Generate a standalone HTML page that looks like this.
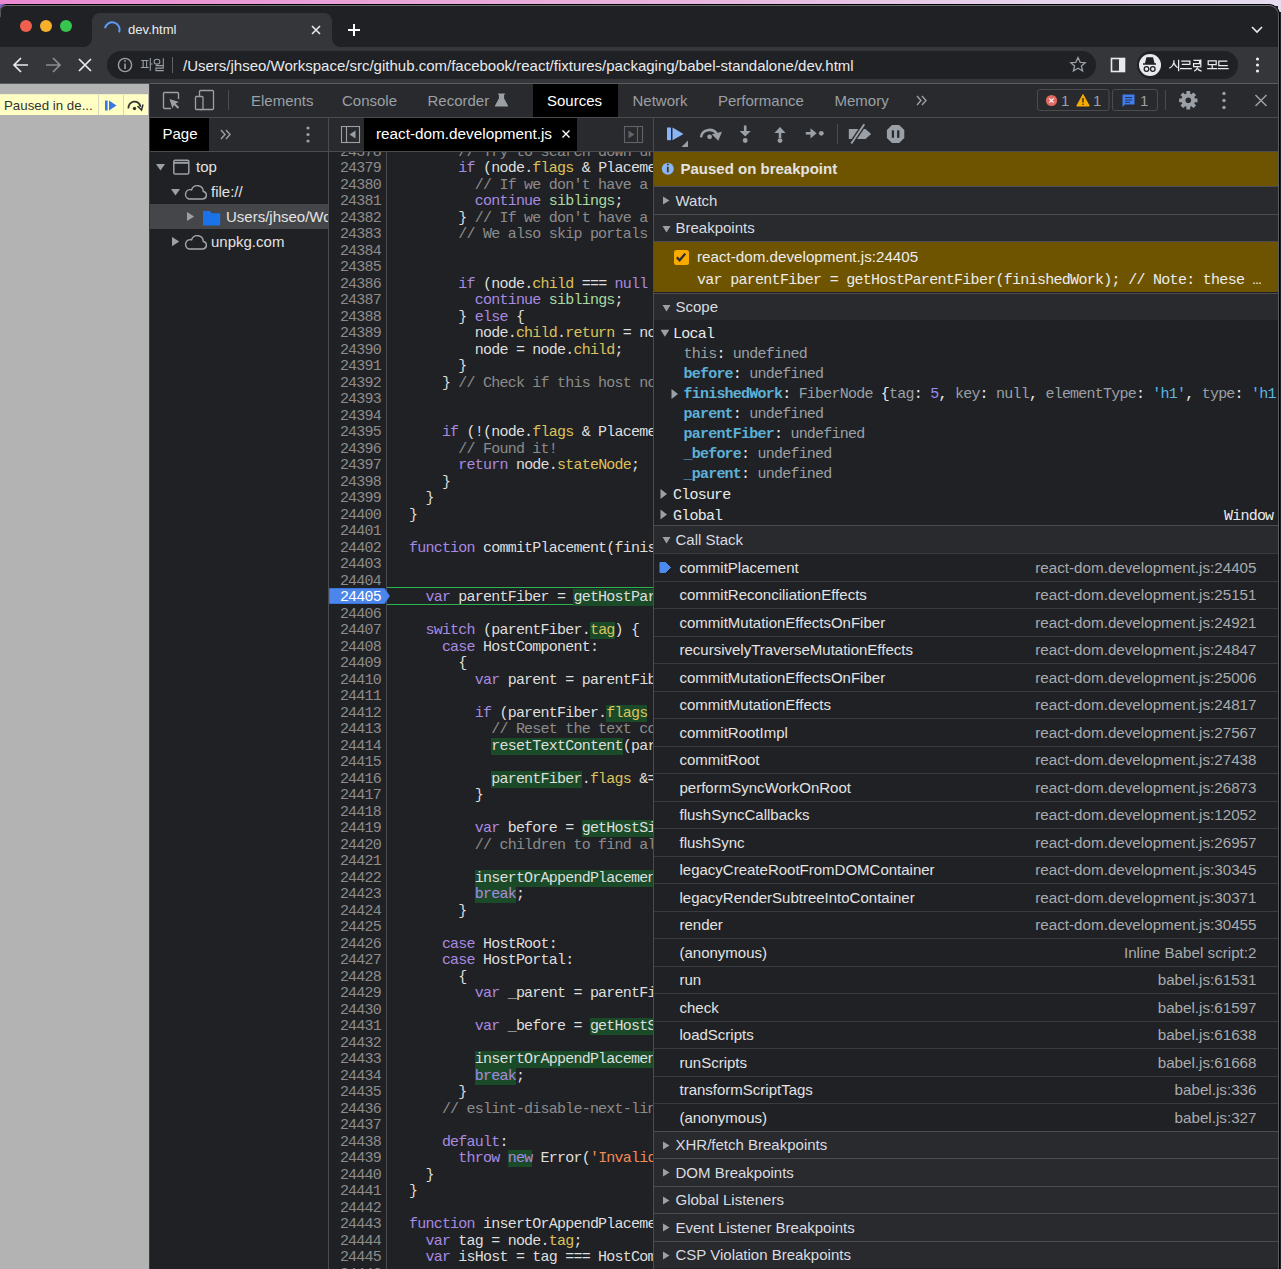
<!DOCTYPE html>
<html><head><meta charset="utf-8">
<style>
*{box-sizing:border-box;margin:0;padding:0}
html,body{width:1281px;height:1269px;overflow:hidden;background:#202124}
body{position:relative;font-family:"Liberation Sans",sans-serif;color:#e8eaed}
.a{position:absolute}
.mono{font-family:"Liberation Mono",monospace}
svg{position:absolute;overflow:visible}
#pink{left:0;top:0;width:1281px;height:12px;background:linear-gradient(90deg,#ea8ad3 0%,#e9a4d9 30%,#e8b6de 55%,#e6d3ec 80%,#e5dcef 100%)}
#win{left:0;top:4px;width:1280px;height:1265px;background:#202124;border-top:1px solid #000;border-right:1px solid #000;border-radius:7px 11px 0 0;overflow:hidden}
#corner{left:0;top:4px;width:8px;height:8px;background:#8a6cc2}
#winhl{left:0;top:5px;width:1279px;height:1264px;border-top:1px solid #6a6b6e;border-right:1px solid #5a5b5e;border-radius:6px 10px 0 0;pointer-events:none;z-index:50}
#tabbar{left:1px;top:6px;width:1277px;height:41px;background:#202124;border-radius:5px 0 0 0}
#tab{left:92px;top:13px;width:240px;height:34px;background:#35363a;border-radius:8px 8px 0 0}
#toolbar{left:0;top:47px;width:1278px;height:37px;background:#35363a}
#omni{left:107px;top:51px;width:989px;height:28px;background:#202124;border-radius:14px}
#page{left:0;top:84px;width:149px;height:1185px;background:#b3b3b3}
#dt{left:149px;top:83px;width:1129px;height:1186px;background:#202124;border-left:1px solid #3a3b3e}
.tt{top:92px;font-size:15px;line-height:17px;color:#9aa0a6;white-space:nowrap}
.nv{font-size:15px;line-height:17px;color:#e3e3e3;white-space:nowrap}
.nums,.code{font-size:15px;line-height:16.5px;letter-spacing:-0.78px;white-space:pre}
.nums{text-align:right;color:#8c8c8c}
.code{color:#dedede}
.code .k{color:#a88ae0}.code .p{color:#dcc25c}.code .v{color:#a9dba0}.code .c{color:#8c8c8c}.code .s{color:#f28b54}
.code .h{background:#1b4a29}
.code div{padding-left:22px}
.nums div.ex{color:#fff}
.sh{left:0;width:624px;height:27.5px;background:#292a2d;border-top:1px solid #4a4c50;font-size:15px;line-height:17px;color:#d9dce0;white-space:nowrap}
.sh span{position:absolute;left:21.5px;top:4.5px}
.sc{font-size:15px;line-height:17px;letter-spacing:-0.78px;white-space:pre}
.sc .und{color:#9aa0a6}.sc .pn{color:#5db0d7}.sc .str{color:#5cb8e0}
.cs{position:relative;height:27.5px;border-top:1px solid #3a3b3e;font-size:15px;line-height:17px;white-space:nowrap}
.cs .fn{position:absolute;left:25.5px;top:4.5px;color:#e3e3e3}
.cs .loc{position:absolute;right:21.5px;top:4.5px;color:#a8abae;font-size:15.2px}
</style></head>
<body>
<div id="pink" class="a"></div>
<div id="corner" class="a"></div>
<div id="win" class="a"></div>
<div id="tabbar" class="a"></div>
<div id="tab" class="a"></div>
<div id="toolbar" class="a"></div>
<div id="omni" class="a"></div>
<div id="page" class="a"></div>
<div id="dt" class="a"></div>

<!-- traffic lights -->
<div class="a" style="left:20px;top:20px;width:12px;height:12px;border-radius:50%;background:#f0604f"></div>
<div class="a" style="left:40px;top:20px;width:12px;height:12px;border-radius:50%;background:#f6b02b"></div>
<div class="a" style="left:60px;top:20px;width:12px;height:12px;border-radius:50%;background:#36c54f"></div>
<!-- tab flares -->
<div class="a" style="left:84px;top:39px;width:8px;height:8px;background:radial-gradient(circle at 0 0,#202124 7.5px,#35363a 8px)"></div>
<div class="a" style="left:332px;top:39px;width:8px;height:8px;background:radial-gradient(circle at 100% 0,#202124 7.5px,#35363a 8px)"></div>
<svg class="a" style="left:0;top:0" width="1281" height="84">
 <path d="M105 28.3 A7.4 7.4 0 1 1 119.2 32.3" fill="none" stroke="#5b9cf6" stroke-width="2"/>
 <path d="M312 26 L320 34 M320 26 L312 34" stroke="#e8eaed" stroke-width="1.6"/>
 <path d="M348 30 H360 M354 24 V36" stroke="#fff" stroke-width="2"/>
 <path d="M1252 27 L1257 32 L1262 27" fill="none" stroke="#e8eaed" stroke-width="1.6"/>
 <!-- back fwd stop -->
 <path d="M14 65 H28 M21 58 L14 65 L21 72" fill="none" stroke="#e8eaed" stroke-width="1.7"/>
 <path d="M46 65 H60 M53 58 L60 65 L53 72" fill="none" stroke="#8a8c90" stroke-width="1.7"/>
 <path d="M79 59 L91 71 M91 59 L79 71" stroke="#e8eaed" stroke-width="1.7"/>
 <circle cx="125" cy="65" r="6.6" fill="none" stroke="#9aa0a6" stroke-width="1.4"/>
 <path d="M125 63.5 V69" stroke="#9aa0a6" stroke-width="1.6"/><circle cx="125" cy="61" r="0.9" fill="#9aa0a6"/>
 <path d="M172.5 57 V73" stroke="#5f6368" stroke-width="1"/>
 <path d="M1078 57.5 L1080.2 62.3 L1085.2 62.7 L1081.4 66 L1082.6 71 L1078 68.3 L1073.4 71 L1074.6 66 L1070.8 62.7 L1075.8 62.3 Z" fill="none" stroke="#9aa0a6" stroke-width="1.3"/>
 <rect x="1111.5" y="58.5" width="13" height="13" fill="none" stroke="#e8eaed" stroke-width="1.6"/>
 <rect x="1119" y="59" width="5" height="12" fill="#e8eaed"/>
 <circle cx="1257.5" cy="59" r="1.6" fill="#e8eaed"/><circle cx="1257.5" cy="65" r="1.6" fill="#e8eaed"/><circle cx="1257.5" cy="71" r="1.6" fill="#e8eaed"/>
</svg>
<div class="a" style="left:128px;top:22px;font-size:13.1px;color:#e8eaed;line-height:16px">dev.html</div>
<svg class="a" style="left:0;top:0" width="200" height="84"><g fill="none" stroke="#9aa0a6" stroke-width="1.05">
 <path d="M141.2 60.4 H148.4 M143.2 60.5 V67.4 M146.6 60.5 V67.4 M140.9 67.5 H148.8"/>
 <path d="M150.3 58.1 V70.7 M150.3 63.9 H152.6"/>
 <ellipse cx="157" cy="61.7" rx="2.9" ry="2.4"/>
 <path d="M163.3 58.2 V67.6 M155.6 65.6 H163.3 V68.1 H155.9 V70.6 H163.8"/>
</g></svg>
<div class="a" style="left:183px;top:57px;font-size:15px;color:#e8eaed;line-height:17px;white-space:nowrap">/Users/jhseo/Workspace/src/github.com/facebook/react/fixtures/packaging/babel-standalone/dev.html</div>
<div class="a" style="left:1137px;top:51px;width:101px;height:28px;border-radius:14px;background:#202124"></div>
<div class="a" style="left:1139px;top:54px;width:22px;height:22px;border-radius:50%;background:#e8eaed"></div>
<svg class="a" style="left:0;top:0" width="1281" height="84">
 <path d="M1143 64 H1156 M1145.5 64 L1147 58 H1152.5 L1154 64" fill="#202124" stroke="#202124" stroke-width="1.4"/>
 <circle cx="1146.5" cy="69" r="2.3" fill="none" stroke="#202124" stroke-width="1.3"/>
 <circle cx="1152.8" cy="69" r="2.3" fill="none" stroke="#202124" stroke-width="1.3"/>
</svg>
<svg class="a" style="left:0;top:0" width="1281" height="84"><g fill="none" stroke="#e8eaed" stroke-width="1.25">
 <path d="M1173.9 60.2 V62.5 Q1173.2 66.2 1169.3 68.3 M1174 63 Q1175 66.2 1177.6 67.8 M1178.6 59.8 V71.2"/>
 <path d="M1181.2 61.2 H1189.9 V64.8 M1181.8 64.3 H1189.9 M1180 68.5 H1191.8"/>
 <path d="M1193.4 60.4 H1199.6 V63.6 H1193.6 V66.6 H1199.9 M1200.8 59.4 V67.4 M1197.5 67.4 Q1196.8 70 1194.2 71.2 M1197.6 68.6 Q1198.6 70.4 1201.6 71.2"/>
 <path d="M1208.2 60.8 H1216.2 V64.6 H1208.2 Z M1212.2 64.6 V68.5 M1207.1 68.5 H1217.2"/>
 <path d="M1227.4 61.2 H1218.8 V65.5 H1227.8 M1217.9 68.5 H1228.7"/>
</g></svg>
<div class="a" style="left:0;top:83px;width:149px;height:1px;background:#5a5b5e"></div>
<!-- paused overlay -->
<div class="a" style="left:0;top:94px;width:148px;height:21px;background:#ffffc4;border-top:1px solid #f0f0c0"></div>
<div class="a" style="left:4px;top:98px;font-size:13.3px;color:#333;line-height:16px;white-space:nowrap">Paused in de...</div>
<div class="a" style="left:98px;top:95px;width:1px;height:20px;background:#d7d7c0"></div>
<div class="a" style="left:123px;top:95px;width:1px;height:20px;background:#d7d7c0"></div>
<svg class="a" style="left:0;top:0" width="160" height="130">
 <rect x="105" y="100.5" width="2.6" height="10" fill="#3b78e7"/>
 <path d="M109 100.5 L116.5 105.5 L109 110.5 Z" fill="#3b78e7"/>
 <path d="M128.5 108.5 A6 6 0 0 1 140.5 106.8" fill="none" stroke="#333" stroke-width="1.8"/>
 <path d="M137.5 106 L141.5 110 L143 104.5" fill="none" stroke="#333" stroke-width="1.5"/>
 <circle cx="134.5" cy="108.5" r="1.7" fill="#333"/>
</svg>

<!-- devtools main toolbar -->
<div class="a" style="left:150px;top:83px;width:1128px;height:1px;background:#5c5d60"></div>
<div class="a" style="left:150px;top:84px;width:1128px;height:33px;background:#292a2d"></div>
<div class="a" style="left:150px;top:117px;width:1128px;height:1px;background:#4a4c50"></div>
<div class="a" style="left:533px;top:84px;width:85px;height:33px;background:#000"></div>
<div class="a tt" style="left:251px">Elements</div>
<div class="a tt" style="left:342px">Console</div>
<div class="a tt" style="left:427.5px">Recorder</div>
<div class="a tt" style="left:547px;color:#fff">Sources</div>
<div class="a tt" style="left:632.5px">Network</div>
<div class="a tt" style="left:718px">Performance</div>
<div class="a tt" style="left:834.5px">Memory</div>
<svg class="a" style="left:0;top:0" width="1281" height="160">
 <!-- inspect -->
 <path d="M171 108.5 H164.5 Q163.5 108.5 163.5 107.5 V93.5 Q163.5 92.5 164.5 92.5 H177.5 Q178.5 92.5 178.5 93.5 V99" fill="none" stroke="#9aa0a6" stroke-width="1.4"/>
 <path d="M169.5 99 L179 102 L175.5 103.5 L179.2 107.2 L177.7 108.7 L174 105 L172.5 108.5 Z" fill="#9aa0a6"/>
 <!-- device -->
 <rect x="199.5" y="90.5" width="14" height="19" rx="1" fill="none" stroke="#9aa0a6" stroke-width="1.3"/>
 <rect x="195.5" y="96.5" width="7.5" height="13" rx="1" fill="#292a2d" stroke="#9aa0a6" stroke-width="1.3"/>
 <path d="M228.5 90 V110" stroke="#4a4c50" stroke-width="1"/>
 <!-- flask -->
 <path d="M498 94 H505 M499.5 94 V98.5 L495.5 106 H507.5 L503.5 98.5 V94" fill="#9aa0a6" stroke="#9aa0a6" stroke-width="1.2" stroke-linejoin="round"/>
 <!-- more tabs -->
 <path d="M917 96 L921 100.5 L917 105 M922 96 L926 100.5 L922 105" fill="none" stroke="#9aa0a6" stroke-width="1.4"/>
 <!-- badges -->
 <rect x="1037.5" y="89.5" width="71.5" height="21" rx="2.5" fill="none" stroke="#4a4c50" stroke-width="1"/>
 <rect x="1112.5" y="89.5" width="45" height="21" rx="2.5" fill="none" stroke="#4a4c50" stroke-width="1"/>
 <circle cx="1051.5" cy="100.5" r="5.6" fill="#e46962"/>
 <path d="M1049.3 98.3 L1053.7 102.7 M1053.7 98.3 L1049.3 102.7" stroke="#fff" stroke-width="1.1"/>
 <path d="M1083 94.5 L1089.3 106 H1076.7 Z" fill="#f9ab00" stroke="#f9ab00" stroke-width="1" stroke-linejoin="round"/>
 <path d="M1083 98 V102.5" stroke="#292a2d" stroke-width="1.4"/><circle cx="1083" cy="104.3" r="0.8" fill="#292a2d"/>
 <path d="M1122.5 94.5 H1134.5 V104.5 H1125 L1122.5 107 Z" fill="#3f7df0"/>
 <path d="M1125 97.5 H1132 M1125 100 H1132 M1125 102.3 H1130" stroke="#292a2d" stroke-width="0.9"/>
 <path d="M1165.5 90 V110" stroke="#4a4c50" stroke-width="1"/>
 <!-- gear -->
 <g transform="translate(1188.3,100.3)" fill="#9aa0a6">
  <circle r="6.8"/>
  <rect x="-1.9" y="-9.2" width="3.8" height="4" rx="0.5" transform="rotate(0)"/>
  <rect x="-1.9" y="-9.2" width="3.8" height="4" rx="0.5" transform="rotate(45)"/>
  <rect x="-1.9" y="-9.2" width="3.8" height="4" rx="0.5" transform="rotate(90)"/>
  <rect x="-1.9" y="-9.2" width="3.8" height="4" rx="0.5" transform="rotate(135)"/>
  <rect x="-1.9" y="-9.2" width="3.8" height="4" rx="0.5" transform="rotate(180)"/>
  <rect x="-1.9" y="-9.2" width="3.8" height="4" rx="0.5" transform="rotate(225)"/>
  <rect x="-1.9" y="-9.2" width="3.8" height="4" rx="0.5" transform="rotate(270)"/>
  <rect x="-1.9" y="-9.2" width="3.8" height="4" rx="0.5" transform="rotate(315)"/>
  <circle r="2.8" fill="#292a2d"/>
 </g>
 <circle cx="1224" cy="93.5" r="1.7" fill="#9aa0a6"/><circle cx="1224" cy="100.5" r="1.7" fill="#9aa0a6"/><circle cx="1224" cy="107.5" r="1.7" fill="#9aa0a6"/>
 <path d="M1255.5 95 L1266.5 106 M1266.5 95 L1255.5 106" stroke="#9aa0a6" stroke-width="1.5"/>
</svg>
<div class="a" style="left:1061px;top:92px;font-size:15px;color:#9aa0a6;line-height:17px">1</div>
<div class="a" style="left:1093px;top:92px;font-size:15px;color:#9aa0a6;line-height:17px">1</div>
<div class="a" style="left:1140px;top:92px;font-size:15px;color:#9aa0a6;line-height:17px">1</div>

<!-- sources sub toolbar -->
<div class="a" style="left:150px;top:118px;width:1128px;height:33px;background:#292a2d"></div>
<div class="a" style="left:150px;top:151px;width:1128px;height:1px;background:#4a4c50"></div>
<div class="a" style="left:150px;top:118px;width:59px;height:33px;background:#000"></div>
<div class="a tt" style="left:162.5px;top:125px;color:#fff">Page</div>
<div class="a" style="left:328px;top:118px;width:1px;height:1151px;background:#4a4c50"></div>
<div class="a" style="left:364px;top:118px;width:213px;height:33px;background:#000"></div>
<div class="a tt" style="left:376px;top:125px;color:#fff;font-size:15.3px">react-dom.development.js</div>
<div class="a" style="left:653px;top:118px;width:1px;height:1151px;background:#4a4c50"></div>
<svg class="a" style="left:0;top:0" width="1281" height="300">
 <path d="M221 130 L225 134.5 L221 139 M226 130 L230 134.5 L226 139" fill="none" stroke="#9aa0a6" stroke-width="1.4"/>
 <circle cx="308" cy="128" r="1.6" fill="#9aa0a6"/><circle cx="308" cy="134.5" r="1.6" fill="#9aa0a6"/><circle cx="308" cy="141" r="1.6" fill="#9aa0a6"/>
 <rect x="341.5" y="126.5" width="18" height="16" fill="none" stroke="#9aa0a6" stroke-width="1.1"/>
 <path d="M346.5 126.5 V142.5" stroke="#9aa0a6" stroke-width="1.1"/>
 <path d="M355.5 130.5 L349.5 134.5 L355.5 138.5 Z" fill="#9aa0a6"/>
 <path d="M562.5 130.5 L569.5 137.5 M569.5 130.5 L562.5 137.5" stroke="#fff" stroke-width="1.4"/>
 <rect x="624.5" y="126.5" width="18" height="16" fill="none" stroke="#5f6368" stroke-width="1.1"/>
 <path d="M637.5 126.5 V142.5" stroke="#5f6368" stroke-width="1.1"/>
 <path d="M628.5 130.5 L634.5 134.5 L628.5 138.5 Z" fill="#5f6368"/>
 <!-- debugger toolbar -->
 <rect x="667" y="127.5" width="4" height="12.7" fill="#8ab4f8"/>
 <path d="M672.5 127.5 L683.5 133.9 L672.5 140.2 Z" fill="#8ab4f8"/>
 <path d="M688 140.5 V147 H681.5 Z" fill="#9aa0a6"/>
 <path d="M701 137.3 A8.6 8.3 0 0 1 716.6 133.5" fill="none" stroke="#9aa0a6" stroke-width="2.5"/>
 <path d="M711.8 134.2 L722 131.8 L718.3 140.8 Z" fill="#9aa0a6"/>
 <circle cx="709.6" cy="136.8" r="2.4" fill="#9aa0a6"/>
 <path d="M745.2 125.5 V132.5" stroke="#9aa0a6" stroke-width="2.6"/>
 <path d="M739.6 131 H750.8 L745.2 136.5 Z" fill="#9aa0a6"/>
 <circle cx="745.2" cy="140.5" r="2.4" fill="#9aa0a6"/>
 <path d="M780 132 V138" stroke="#9aa0a6" stroke-width="2.6"/>
 <path d="M774.4 133 H785.6 L780 127 Z" fill="#9aa0a6"/>
 <circle cx="780" cy="140.6" r="2.4" fill="#9aa0a6"/>
 <path d="M805.8 133.3 H811.5" stroke="#9aa0a6" stroke-width="2.6"/>
 <path d="M810.5 128.2 V138.4 L816.6 133.3 Z" fill="#9aa0a6"/>
 <circle cx="821.3" cy="133.3" r="2.4" fill="#9aa0a6"/>
 <path d="M837.5 124 V144" stroke="#4a4c50" stroke-width="1"/>
 <path d="M848.8 128.9 H865.5 L871.1 134 L865.5 138.9 H848.8 Z" fill="#9aa0a6"/>
 <path d="M851.3 143.5 L864.3 124.2" stroke="#292a2d" stroke-width="4.6"/>
 <path d="M851.3 143.5 L864.3 124.2" stroke="#9aa0a6" stroke-width="2"/>
 <path d="M892 125 H899.2 L904.3 130.1 V137.9 L899.2 143 H892 L886.9 137.9 V130.1 Z" fill="#9aa0a6"/>
 <rect x="891.8" y="130.3" width="2.2" height="7.5" fill="#292a2d"/><rect x="897.1" y="130.3" width="2.3" height="7.5" fill="#292a2d"/>
</svg>
<!-- navigator -->
<div class="a" style="left:150px;top:204px;width:178px;height:25px;background:#454649"></div>
<svg class="a" style="left:0;top:0" width="330" height="260">
 <path d="M156 164 H165 L160.5 170.5 Z" fill="#9aa0a6"/>
 <rect x="173.8" y="160.2" width="15" height="13.8" rx="1.3" fill="none" stroke="#9aa0a6" stroke-width="1.5"/>
 <path d="M174 162.8 H188.5" stroke="#9aa0a6" stroke-width="2"/>
 <path d="M171 189 H180 L175.5 195.5 Z" fill="#9aa0a6"/>
 <path d="M189 199 H203 A3.8 3.8 0 0 0 203.3 191.5 A6 6 0 0 0 191.6 189.8 A4.7 4.7 0 0 0 189 199 Z" fill="none" stroke="#a3a6aa" stroke-width="1.4"/>
 <path d="M187 212 V221 L194.2 216.5 Z" fill="#9aa0a6"/>
 <path d="M203 211 H210 L211.5 213.3 H220.2 V225.5 H203 Z" fill="#1a73e8"/>
 <path d="M172 237 V246.2 L179.3 241.6 Z" fill="#9aa0a6"/>
 <path d="M189 249 H203 A3.8 3.8 0 0 0 203.3 241.5 A6 6 0 0 0 191.6 239.8 A4.7 4.7 0 0 0 189 249 Z" fill="none" stroke="#a3a6aa" stroke-width="1.4"/>
</svg>
<div class="a nv" style="left:196px;top:158px">top</div>
<div class="a nv" style="left:211px;top:183px">file://</div>
<div class="a nv" style="left:226px;top:208px;width:102px;overflow:hidden">Users/jhseo/Workspace</div>
<div class="a nv" style="left:211px;top:233px">unpkg.com</div>

<!-- editor -->
<div class="a" style="left:329px;top:152px;width:324px;height:1117px;overflow:hidden;background:#202124">
 <div class="a" style="left:57px;top:0;width:1px;height:1117px;background:#4a4c50"></div>
 <div class="a" style="left:58px;top:435px;width:266px;height:18px;border-top:1px solid #2bb553;border-bottom:1px solid #2bb553"></div>
 <svg class="a" style="left:0;top:0" width="70" height="1117"><path d="M0.5 436.5 H55.5 L60.5 444 L55.5 451.5 H0.5 Z" fill="#4d86ea" stroke="#3b73dc" stroke-width="1"/></svg>
 <div class="a mono nums" style="left:0;top:-7.25px;width:52px"><div>24378</div><div>24379</div><div>24380</div><div>24381</div><div>24382</div><div>24383</div><div>24384</div><div>24385</div><div>24386</div><div>24387</div><div>24388</div><div>24389</div><div>24390</div><div>24391</div><div>24392</div><div>24393</div><div>24394</div><div>24395</div><div>24396</div><div>24397</div><div>24398</div><div>24399</div><div>24400</div><div>24401</div><div>24402</div><div>24403</div><div>24404</div><div class="ex">24405</div><div>24406</div><div>24407</div><div>24408</div><div>24409</div><div>24410</div><div>24411</div><div>24412</div><div>24413</div><div>24414</div><div>24415</div><div>24416</div><div>24417</div><div>24418</div><div>24419</div><div>24420</div><div>24421</div><div>24422</div><div>24423</div><div>24424</div><div>24425</div><div>24426</div><div>24427</div><div>24428</div><div>24429</div><div>24430</div><div>24431</div><div>24432</div><div>24433</div><div>24434</div><div>24435</div><div>24436</div><div>24437</div><div>24438</div><div>24439</div><div>24440</div><div>24441</div><div>24442</div><div>24443</div><div>24444</div><div>24445</div><div>24446</div></div>
 <div class="a mono code" style="left:58px;top:-7.25px;width:266px"><div>      <span class="c">// Try to search down until we find a Host.</span></div><div>      <span class="k">if</span> (node.<span class="p">flags</span> &amp; Placement) {</div><div>        <span class="c">// If we don&#x27;t have a child, try the siblings instead.</span></div><div>        <span class="k">continue</span> <span class="v">siblings</span>;</div><div>      } <span class="c">// If we don&#x27;t have a child, try the siblings instead.</span></div><div>      <span class="c">// We also skip portals because they are not part of this host tree.</span></div><div>&nbsp;</div><div>&nbsp;</div><div>      <span class="k">if</span> (node.<span class="p">child</span> === <span class="k">null</span> || node.<span class="p">tag</span> === HostPortal) {</div><div>        <span class="k">continue</span> <span class="v">siblings</span>;</div><div>      } <span class="k">else</span> {</div><div>        node.<span class="p">child</span>.<span class="p">return</span> = node;</div><div>        node = node.<span class="p">child</span>;</div><div>      }</div><div>    } <span class="c">// Check if this host node is stable or about to be placed.</span></div><div>&nbsp;</div><div>&nbsp;</div><div>    <span class="k">if</span> (!(node.<span class="p">flags</span> &amp; Placement)) {</div><div>      <span class="c">// Found it!</span></div><div>      <span class="k">return</span> node.<span class="p">stateNode</span>;</div><div>    }</div><div>  }</div><div>}</div><div>&nbsp;</div><div><span class="k">function</span> commitPlacement(finishedWork) {</div><div>&nbsp;</div><div>&nbsp;</div><div class="ex">  <span class="k">var</span> parentFiber = <span class="h">getHostParentFiber</span>(finishedWork);</div><div>&nbsp;</div><div>  <span class="k">switch</span> (parentFiber.<span class="h"><span class="p">tag</span></span>) {</div><div>    <span class="k">case</span> HostComponent:</div><div>      {</div><div>        <span class="k">var</span> parent = parentFiber.<span class="p">stateNode</span>;</div><div>&nbsp;</div><div>        <span class="k">if</span> (parentFiber.<span class="h"><span class="p">flags</span></span> &amp; ContentReset) {</div><div>          <span class="c">// Reset the text content of the parent before doing any insertions</span></div><div>          <span class="h">resetTextContent</span>(parent); <span class="c">// Clear ContentReset from the effect tag</span></div><div>&nbsp;</div><div>          <span class="h">parentFiber</span>.<span class="p">flags</span> &amp;= ~ContentReset;</div><div>        }</div><div>&nbsp;</div><div>        <span class="k">var</span> before = <span class="h">getHostSibling</span>(finishedWork); <span class="c">// We only have the top Fiber</span></div><div>        <span class="c">// children to find all the terminal nodes.</span></div><div>&nbsp;</div><div>        <span class="h">insertOrAppendPlacementNode</span>(finishedWork, before, parent);</div><div>        <span class="h"><span class="k">break</span></span>;</div><div>      }</div><div>&nbsp;</div><div>    <span class="k">case</span> HostRoot:</div><div>    <span class="k">case</span> HostPortal:</div><div>      {</div><div>        <span class="k">var</span> _parent = parentFiber.<span class="p">stateNode</span>.<span class="p">containerInfo</span>;</div><div>&nbsp;</div><div>        <span class="k">var</span> _before = <span class="h">getHostSibling</span>(finishedWork);</div><div>&nbsp;</div><div>        <span class="h">insertOrAppendPlacementNodeIntoContainer</span>(finishedWork, _before, _parent);</div><div>        <span class="h"><span class="k">break</span></span>;</div><div>      }</div><div>    <span class="c">// eslint-disable-next-line-no-fallthrough</span></div><div>&nbsp;</div><div>    <span class="k">default</span>:</div><div>      <span class="k">throw</span> <span class="h"><span class="k">new</span></span> Error(<span class="s">&#x27;Invalid host parent fiber. This error is likely caused by a bug in React.&#x27;</span>);</div><div>  }</div><div>}</div><div>&nbsp;</div><div><span class="k">function</span> insertOrAppendPlacementNodeIntoContainer(node, before, parent) {</div><div>  <span class="k">var</span> tag = node.<span class="p">tag</span>;</div><div>  <span class="k">var</span> isHost = tag === HostComponent || tag === HostText;</div><div>&nbsp;</div></div>
</div>

<!-- sidebar -->
<div class="a" style="left:654px;top:152px;width:624px;height:1117px;overflow:hidden;background:#202124">
 <div class="a" style="left:0;top:0;width:624px;height:34px;background:#6e5400"></div>
 <svg class="a" style="left:0;top:0" width="30" height="34"><circle cx="13.8" cy="16.8" r="6" fill="#8ab4f8"/><path d="M13.8 14.8 V20.3" stroke="#4a3a00" stroke-width="1.8"/><circle cx="13.8" cy="12.6" r="1" fill="#4a3a00"/></svg>
 <div class="a" style="left:26.5px;top:8px;font-size:15px;line-height:17px;font-weight:bold;color:#e3e3e3;white-space:nowrap">Paused on breakpoint</div>
<div class="a sh" style="top:34px"><svg class="a" style="left:9px;top:10px" width="8" height="8"><path d="M0 -0.5 L6.5 3.5 L0 7.5 Z" fill="#9aa0a6"/></svg><span>Watch</span></div><div class="a sh" style="top:61.5px"><svg class="a" style="left:9px;top:10px" width="8" height="8"><path d="M-0.5 1 H7.5 L3.5 7.5 Z" fill="#9aa0a6"/></svg><span>Breakpoints</span></div>
 <div class="a" style="left:0;top:89px;width:624px;height:51px;background:#6e5400;border-top:1px solid #4a4c50"></div>
 <div class="a" style="left:20px;top:98px;width:15px;height:15px;border-radius:2.5px;background:#f9ab00"></div>
 <svg class="a" style="left:0;top:0" width="60" height="130"><path d="M22.8 105.2 L25.6 108.3 L31.3 101.6" fill="none" stroke="#2b2b33" stroke-width="2.2"/></svg>
 <div class="a" style="left:43px;top:95.8px;font-size:15.2px;line-height:17px;color:#ececec;white-space:nowrap">react-dom.development.js:24405</div>
 <div class="a mono sc" style="left:43px;top:120px;color:#ececec;letter-spacing:-0.71px">var parentFiber = getHostParentFiber(finishedWork); // Note: these …</div>
<div class="a sh" style="top:140.5px"><svg class="a" style="left:9px;top:10px" width="8" height="8"><path d="M-0.5 1 H7.5 L3.5 7.5 Z" fill="#9aa0a6"/></svg><span>Scope</span></div>
 <svg class="a" style="left:0;top:0" width="30" height="380"><path d="M6.5 177.8 H15.3 L10.9 184.8 Z" fill="#9aa0a6"/><path d="M17.5 237 V247 L24 242 Z" fill="#9aa0a6"/><path d="M6.5 337 V347 L13 342 Z" fill="#9aa0a6"/><path d="M6.5 357.5 V367.5 L13 362.5 Z" fill="#9aa0a6"/></svg>
 <div class="a mono sc" style="left:19px;top:173.5px;color:#e8eaed">Local</div>
<div class="a mono sc" style="left:29.5px;top:194px"><span class="und">this</span><span style="color:#e8eaed">:</span> <span class="und">undefined</span></div><div class="a mono sc" style="left:29.5px;top:214px"><b class="pn">before</b><span style="color:#e8eaed">:</span> <span class="und">undefined</span></div><div class="a mono sc" style="left:29.5px;top:234px"><b class="pn">finishedWork</b><span style="color:#e8eaed">:</span> <span class="und">FiberNode </span><span style="color:#e8eaed">{</span><span class="und">tag</span><span style="color:#e8eaed">:</span> <span style="color:#9b8cf6">5</span><span style="color:#e8eaed">,</span> <span class="und">key</span><span style="color:#e8eaed">:</span> <span class="und">null</span><span style="color:#e8eaed">,</span> <span class="und">elementType</span><span style="color:#e8eaed">:</span> <span class="str">'h1'</span><span style="color:#e8eaed">,</span> <span class="und">type</span><span style="color:#e8eaed">:</span> <span class="str">'h1'</span></div><div class="a mono sc" style="left:29.5px;top:254px"><b class="pn">parent</b><span style="color:#e8eaed">:</span> <span class="und">undefined</span></div><div class="a mono sc" style="left:29.5px;top:274px"><b class="pn">parentFiber</b><span style="color:#e8eaed">:</span> <span class="und">undefined</span></div><div class="a mono sc" style="left:29.5px;top:294px"><b class="pn">_before</b><span style="color:#e8eaed">:</span> <span class="und">undefined</span></div><div class="a mono sc" style="left:29.5px;top:314px"><b class="pn">_parent</b><span style="color:#e8eaed">:</span> <span class="und">undefined</span></div>
 <div class="a mono sc" style="left:19px;top:335px;color:#e8eaed">Closure</div>
 <div class="a mono sc" style="left:19px;top:355.5px;color:#e8eaed">Global</div>
 <div class="a mono sc" style="left:570px;top:355.5px;color:#e8eaed">Window</div>
<div class="a sh" style="top:373px;height:28px"><svg class="a" style="left:9px;top:10px" width="8" height="8"><path d="M-0.5 1 H7.5 L3.5 7.5 Z" fill="#9aa0a6"/></svg><span>Call Stack</span></div>
 <div class="a" style="left:0;top:401px;width:624px"><div class="cs"><span class="fn">commitPlacement</span><span class="loc">react-dom.development.js:24405</span></div><div class="cs"><span class="fn">commitReconciliationEffects</span><span class="loc">react-dom.development.js:25151</span></div><div class="cs"><span class="fn">commitMutationEffectsOnFiber</span><span class="loc">react-dom.development.js:24921</span></div><div class="cs"><span class="fn">recursivelyTraverseMutationEffects</span><span class="loc">react-dom.development.js:24847</span></div><div class="cs"><span class="fn">commitMutationEffectsOnFiber</span><span class="loc">react-dom.development.js:25006</span></div><div class="cs"><span class="fn">commitMutationEffects</span><span class="loc">react-dom.development.js:24817</span></div><div class="cs"><span class="fn">commitRootImpl</span><span class="loc">react-dom.development.js:27567</span></div><div class="cs"><span class="fn">commitRoot</span><span class="loc">react-dom.development.js:27438</span></div><div class="cs"><span class="fn">performSyncWorkOnRoot</span><span class="loc">react-dom.development.js:26873</span></div><div class="cs"><span class="fn">flushSyncCallbacks</span><span class="loc">react-dom.development.js:12052</span></div><div class="cs"><span class="fn">flushSync</span><span class="loc">react-dom.development.js:26957</span></div><div class="cs"><span class="fn">legacyCreateRootFromDOMContainer</span><span class="loc">react-dom.development.js:30345</span></div><div class="cs"><span class="fn">legacyRenderSubtreeIntoContainer</span><span class="loc">react-dom.development.js:30371</span></div><div class="cs"><span class="fn">render</span><span class="loc">react-dom.development.js:30455</span></div><div class="cs"><span class="fn">(anonymous)</span><span class="loc">Inline Babel script:2</span></div><div class="cs"><span class="fn">run</span><span class="loc">babel.js:61531</span></div><div class="cs"><span class="fn">check</span><span class="loc">babel.js:61597</span></div><div class="cs"><span class="fn">loadScripts</span><span class="loc">babel.js:61638</span></div><div class="cs"><span class="fn">runScripts</span><span class="loc">babel.js:61668</span></div><div class="cs"><span class="fn">transformScriptTags</span><span class="loc">babel.js:336</span></div><div class="cs"><span class="fn">(anonymous)</span><span class="loc">babel.js:327</span></div></div>
 <svg class="a" style="left:0;top:0" width="30" height="430"><path d="M6 410.5 H11.5 L16.5 415.5 L11.5 420.5 H6 Z" fill="#4d8af0" stroke="#4d8af0" stroke-width="1" stroke-linejoin="round"/></svg>
<div class="a sh" style="top:978.5px"><svg class="a" style="left:9px;top:10px" width="8" height="8"><path d="M0 -0.5 L6.5 3.5 L0 7.5 Z" fill="#9aa0a6"/></svg><span>XHR/fetch Breakpoints</span></div><div class="a sh" style="top:1006.0px"><svg class="a" style="left:9px;top:10px" width="8" height="8"><path d="M0 -0.5 L6.5 3.5 L0 7.5 Z" fill="#9aa0a6"/></svg><span>DOM Breakpoints</span></div><div class="a sh" style="top:1033.5px"><svg class="a" style="left:9px;top:10px" width="8" height="8"><path d="M0 -0.5 L6.5 3.5 L0 7.5 Z" fill="#9aa0a6"/></svg><span>Global Listeners</span></div><div class="a sh" style="top:1061.0px"><svg class="a" style="left:9px;top:10px" width="8" height="8"><path d="M0 -0.5 L6.5 3.5 L0 7.5 Z" fill="#9aa0a6"/></svg><span>Event Listener Breakpoints</span></div><div class="a sh" style="top:1088.5px"><svg class="a" style="left:9px;top:10px" width="8" height="8"><path d="M0 -0.5 L6.5 3.5 L0 7.5 Z" fill="#9aa0a6"/></svg><span>CSP Violation Breakpoints</span></div>
</div>
<div class="a" style="left:1278px;top:84px;width:1px;height:1185px;background:#5a5b5e"></div>

<div class="a" style="left:0;top:5px;width:12px;height:12px;border-top:1px solid #6a6b6e;border-left:1px solid #55565a;border-radius:6px 0 0 0;z-index:50"></div>
<div id="winhl" class="a"></div>
</body></html>
